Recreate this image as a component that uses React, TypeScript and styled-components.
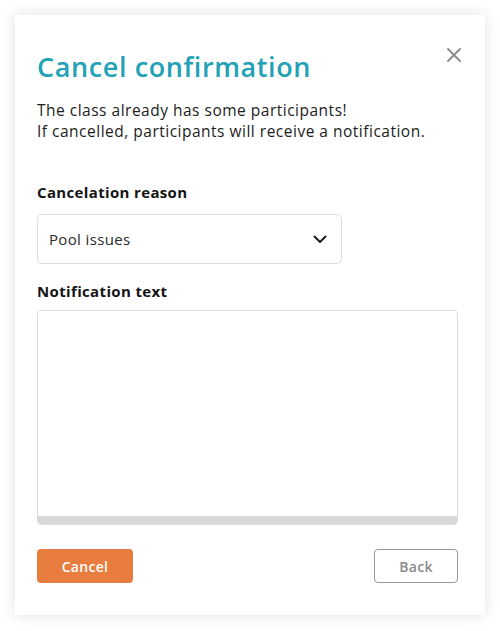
import React from "react";
import styled, { createGlobalStyle } from "styled-components";

const Global = createGlobalStyle`
  html, body { margin: 0; padding: 0; background: #ffffff; }
  body { padding: 15px; font-family: "Open Sans", "Noto Sans", sans-serif; }
  * { box-sizing: border-box; }
`;

const Card = styled.div`
  position: relative;
  width: 470px;
  height: 600px;
  background: #fff;
  box-shadow: 0 0 14px rgba(0, 0, 0, 0.12);
  padding: 36px 27px 32px 22px;
  display: flex;
  flex-direction: column;
`;

const Close = styled.button`
  position: absolute;
  top: 31px;
  right: 22px;
  width: 18px;
  height: 18px;
  padding: 0;
  border: none;
  background: none;
  display: flex;
  align-items: center;
  justify-content: center;
`;

const Title = styled.h1`
  margin: 0;
  font-size: 27px;
  line-height: 32px;
  font-weight: 600;
  color: #22a1b7;
  letter-spacing: 0.6px;
`;

const Intro = styled.p`
  margin: 17px 0 0;
  font-size: 15.5px;
  line-height: 21px;
  color: #1c1c1c;
  letter-spacing: 0.5px;
`;

const Label = styled.div<{ $top: number }>`
  margin-top: ${(p) => p.$top}px;
  font-size: 15px;
  line-height: 20px;
  font-weight: 700;
  color: #141414;
  letter-spacing: 0.35px;
`;

const Select = styled.div`
  margin-top: 12px;
  width: 305px;
  height: 50px;
  border: 1px solid #dedede;
  border-radius: 5px;
  display: flex;
  align-items: center;
  justify-content: space-between;
  padding: 0 14px 0 11px;
  font-size: 15px;
  letter-spacing: 0.35px;
  color: #2a2a2a;
`;

const TextArea = styled.div`
  margin-top: 9px;
  height: 215px;
  border: 1px solid #dcdcdc;
  border-radius: 4px;
  display: flex;
  flex-direction: column;
  overflow: hidden;
`;

const TextBody = styled.div`
  flex: 1;
  background: #fff;
`;

const ScrollBar = styled.div`
  height: 8px;
  background: #d9d9d9;
`;

const Footer = styled.div`
  margin-top: 24px;
  display: flex;
  justify-content: space-between;
`;

const Button = styled.button<{ $primary?: boolean }>`
  height: 34px;
  width: ${(p) => (p.$primary ? 96 : 84)}px;
  border-radius: 4px;
  font-family: inherit;
  font-size: 14px;
  font-weight: 600;
  letter-spacing: 0.3px;
  cursor: pointer;
  border: ${(p) => (p.$primary ? "none" : "1px solid #999")};
  background: ${(p) => (p.$primary ? "#e87d3f" : "#fff")};
  color: ${(p) => (p.$primary ? "#fff" : "#8a8a8a")};
`;

export default function App() {
  return (
    <>
      <Global />
      <Card>
        <Close aria-label="Close">
          <svg width="14" height="14" viewBox="0 0 14 14">
            <path d="M1 1L13 13M13 1L1 13" stroke="#8a8a8a" strokeWidth="1.8" strokeLinecap="round" />
          </svg>
        </Close>
        <Title>Cancel confirmation</Title>
        <Intro>
          The class already has some participants!
          <br />
          If cancelled, participants will receive a notification.
        </Intro>
        <Label $top={40}>Cancelation reason</Label>
        <Select>
          <span>Pool issues</span>
          <svg width="14" height="9" viewBox="0 0 14 9">
            <path d="M1.5 1.5L7 7L12.5 1.5" stroke="#1a1a1a" strokeWidth="2" fill="none" strokeLinecap="round" strokeLinejoin="round" />
          </svg>
        </Select>
        <Label $top={17}>Notification text</Label>
        <TextArea>
          <TextBody />
          <ScrollBar />
        </TextArea>
        <Footer>
          <Button $primary>Cancel</Button>
          <Button>Back</Button>
        </Footer>
      </Card>
    </>
  );
}
